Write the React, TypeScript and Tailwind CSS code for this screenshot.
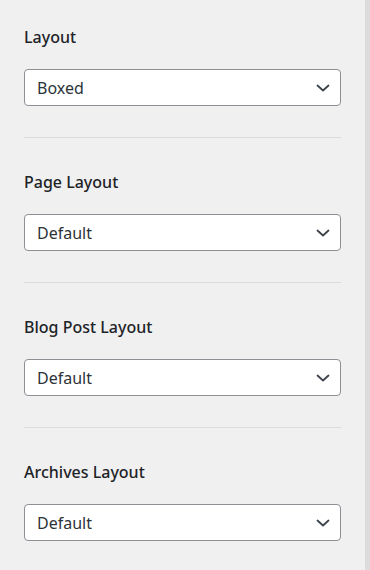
const sections = [
  { label: 'Layout', value: 'Boxed' },
  { label: 'Page Layout', value: 'Default' },
  { label: 'Blog Post Layout', value: 'Default' },
  { label: 'Archives Layout', value: 'Default' },
];

function Chevron() {
  return (
    <svg width="14" height="8" viewBox="0 0 14 8" fill="none">
      <path d="M1.5 1.5l5.5 5 5.5-5" stroke="#3c434a" strokeWidth="1.8" strokeLinecap="round" strokeLinejoin="round" />
    </svg>
  );
}

export default function App() {
  return (
    <div className="flex h-[570px] w-[370px] overflow-hidden bg-[#f0f0f1] font-['Noto_Sans',sans-serif]">
      <div className="flex-1 pl-6 pr-[24px] pt-[27px]">
        {sections.map((s, i) => (
          <div key={s.label}>
            {i > 0 && <div className="mt-[31px] mb-[34px] h-px w-[317px] bg-[#dcdcde]" />}
            <div className="h-5 text-[16px] leading-5 font-medium text-[#1d2327]">{s.label}</div>
            <div className="mt-[22px] flex h-[37px] w-[317px] items-center justify-between rounded border border-[#8c8f94] bg-white pl-3 pr-[10px]">
              <span className="text-base text-[#2c3338]">{s.value}</span>
              <Chevron />
            </div>
          </div>
        ))}
      </div>
      <div className="w-[6px] bg-[#dcdcdc]" />
    </div>
  );
}
